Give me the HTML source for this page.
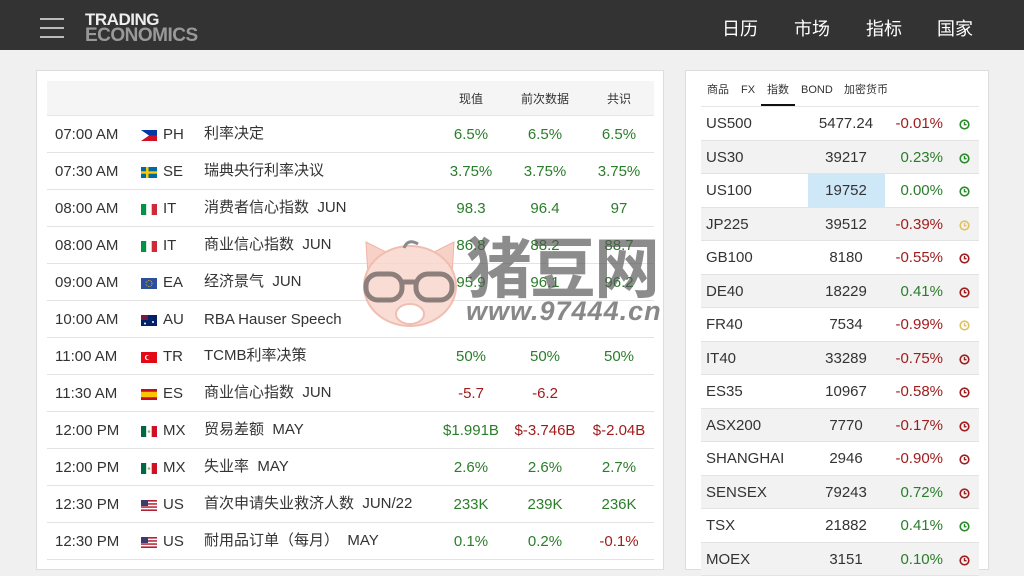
<!DOCTYPE html>
<html><head><meta charset="utf-8"><style>
*{margin:0;padding:0;box-sizing:border-box}
body{width:1024px;height:557px;overflow:hidden;background:#f0f0f0;font-family:"Liberation Sans","Noto Sans CJK SC",sans-serif;color:#333;position:relative}
.hdr{position:absolute;left:0;top:0;width:1024px;height:50px;background:#333}
.ham{position:absolute;left:40px;top:18px;width:24px}
.ham i{display:block;height:2px;background:#bbb;margin-bottom:7px}
.logo{position:absolute;left:85px;top:12px;font-weight:bold;line-height:16px;letter-spacing:-0.5px}
.logo .a{color:#eee;font-size:17px}.logo .b{color:#999;font-size:19px}
.nav{position:absolute;top:15px;font-size:18px;color:#fff}
.lp{position:absolute;left:36px;top:70px;width:628px;height:500px;background:#fff;border:1px solid #ddd}
.th{position:absolute;left:10px;top:10px;width:607px;height:35px;background:#f5f5f5;border-bottom:1px solid #e6e6e6;font-size:12px}
.th span{position:absolute;top:9px;transform:translateX(-50%)}
.row{position:absolute;left:10px;width:607px;height:37px;border-bottom:1px solid #e3e3e3;font-size:15px}
.row span{position:absolute;top:10px;white-space:nowrap}
.row span.d{top:6px}
.row .c{transform:translateX(-50%)}
.g{color:#2a7d2a}.r{color:#a01c1c}
.fl{position:absolute;top:14px;left:94px;width:16px;height:11px}
.rp{position:absolute;left:685px;top:70px;width:304px;height:500px;background:#fff;border:1px solid #ddd}
.tabs{position:absolute;left:15px;top:0;width:278px;height:36px;border-bottom:1px solid #e6e6e6;font-size:11px}
.tabs span{position:absolute;top:10px}
.tabs span.e{top:13px}
.rr{position:absolute;left:15px;width:278px;height:33.5px;border-bottom:1px solid #e3e3e3;font-size:15px}
.rr.o{background:#f2f2f2}
.rr span{position:absolute;top:8px}
.rr .n{left:5px}.rr .v{left:145px;transform:translateX(-50%)}.rr .p{right:36px}
.rr svg{position:absolute;left:258px;top:12px}
.wm{position:absolute;font-weight:bold}
</style></head><body>
<div class="hdr">
<div class="ham"><i></i><i></i><i></i></div>
<div class="logo"><div class="a">TRADING</div><div class="b">ECONOMICS</div></div>
<span class="nav" style="left:722px">日历</span><span class="nav" style="left:794px">市场</span><span class="nav" style="left:866px">指标</span><span class="nav" style="left:937px">国家</span>
</div>

<div class="lp">
<div class="th"><span style="left:424px">现值</span><span style="left:498px">前次数据</span><span style="left:572px">共识</span></div>

<div class="row" style="top:45px"><span style="left:8px">07:00 AM</span><svg class="fl" viewBox="0 0 16 11"><rect width="16" height="5.5" fill="#0038a8"/><rect y="5.5" width="16" height="5.5" fill="#ce1126"/><path d="M0 0L8 5.5L0 11Z" fill="#fff"/></svg><span style="left:116px">PH</span><span class="d" style="left:157px">利率决定</span><span class="c g" style="left:424px">6.5%</span><span class="c g" style="left:498px">6.5%</span><span class="c g" style="left:572px">6.5%</span></div>
<div class="row" style="top:82px"><span style="left:8px">07:30 AM</span><svg class="fl" viewBox="0 0 16 11"><rect width="16" height="11" fill="#006aa7"/><rect x="5" width="2.5" height="11" fill="#fecc00"/><rect y="4.3" width="16" height="2.4" fill="#fecc00"/></svg><span style="left:116px">SE</span><span class="d" style="left:157px">瑞典央行利率决议</span><span class="c g" style="left:424px">3.75%</span><span class="c g" style="left:498px">3.75%</span><span class="c g" style="left:572px">3.75%</span></div>
<div class="row" style="top:119px"><span style="left:8px">08:00 AM</span><svg class="fl" viewBox="0 0 16 11"><rect width="5.3" height="11" fill="#009246"/><rect x="5.3" width="5.4" height="11" fill="#fff"/><rect x="10.7" width="5.3" height="11" fill="#ce2b37"/></svg><span style="left:116px">IT</span><span class="d" style="left:157px">消费者信心指数&nbsp; JUN</span><span class="c g" style="left:424px">98.3</span><span class="c g" style="left:498px">96.4</span><span class="c g" style="left:572px">97</span></div>
<div class="row" style="top:156px"><span style="left:8px">08:00 AM</span><svg class="fl" viewBox="0 0 16 11"><rect width="5.3" height="11" fill="#009246"/><rect x="5.3" width="5.4" height="11" fill="#fff"/><rect x="10.7" width="5.3" height="11" fill="#ce2b37"/></svg><span style="left:116px">IT</span><span class="d" style="left:157px">商业信心指数&nbsp; JUN</span><span class="c g" style="left:424px">86.8</span><span class="c g" style="left:498px">88.2</span><span class="c g" style="left:572px">88.7</span></div>
<div class="row" style="top:193px"><span style="left:8px">09:00 AM</span><svg class="fl" viewBox="0 0 16 11"><rect width="16" height="11" fill="#2b4ea0"/><circle cx="8" cy="5.5" r="3" fill="none" stroke="#fc0" stroke-width="0.8" stroke-dasharray="0.8 0.8"/></svg><span style="left:116px">EA</span><span class="d" style="left:157px">经济景气&nbsp; JUN</span><span class="c g" style="left:424px">95.9</span><span class="c g" style="left:498px">96.1</span><span class="c g" style="left:572px">96.2</span></div>
<div class="row" style="top:230px"><span style="left:8px">10:00 AM</span><svg class="fl" viewBox="0 0 16 11"><rect width="16" height="11" fill="#012169"/><rect width="7" height="5" fill="#c8102e" opacity=".6"/><circle cx="12" cy="7" r="1" fill="#fff"/><circle cx="4" cy="8.5" r="1" fill="#fff"/></svg><span style="left:116px">AU</span><span style="left:157px">RBA Hauser Speech</span></div>
<div class="row" style="top:267px"><span style="left:8px">11:00 AM</span><svg class="fl" viewBox="0 0 16 11"><rect width="16" height="11" fill="#e30a17"/><circle cx="6.5" cy="5.5" r="2.6" fill="#fff"/><circle cx="7.3" cy="5.5" r="2.1" fill="#e30a17"/></svg><span style="left:116px">TR</span><span class="d" style="left:157px">TCMB利率决策</span><span class="c g" style="left:424px">50%</span><span class="c g" style="left:498px">50%</span><span class="c g" style="left:572px">50%</span></div>
<div class="row" style="top:304px"><span style="left:8px">11:30 AM</span><svg class="fl" viewBox="0 0 16 11"><rect width="16" height="11" fill="#c60b1e"/><rect y="2.75" width="16" height="5.5" fill="#ffc400"/></svg><span style="left:116px">ES</span><span class="d" style="left:157px">商业信心指数&nbsp; JUN</span><span class="c r" style="left:424px">-5.7</span><span class="c r" style="left:498px">-6.2</span></div>
<div class="row" style="top:341px"><span style="left:8px">12:00 PM</span><svg class="fl" viewBox="0 0 16 11"><rect width="5.3" height="11" fill="#006847"/><rect x="5.3" width="5.4" height="11" fill="#fff"/><rect x="10.7" width="5.3" height="11" fill="#ce1126"/><circle cx="8" cy="5.5" r="1.3" fill="#8b6"/></svg><span style="left:116px">MX</span><span class="d" style="left:157px">贸易差额&nbsp; MAY</span><span class="c g" style="left:424px">$1.991B</span><span class="c r" style="left:498px">$-3.746B</span><span class="c r" style="left:572px">$-2.04B</span></div>
<div class="row" style="top:378px"><span style="left:8px">12:00 PM</span><svg class="fl" viewBox="0 0 16 11"><rect width="5.3" height="11" fill="#006847"/><rect x="5.3" width="5.4" height="11" fill="#fff"/><rect x="10.7" width="5.3" height="11" fill="#ce1126"/><circle cx="8" cy="5.5" r="1.3" fill="#8b6"/></svg><span style="left:116px">MX</span><span class="d" style="left:157px">失业率&nbsp; MAY</span><span class="c g" style="left:424px">2.6%</span><span class="c g" style="left:498px">2.6%</span><span class="c g" style="left:572px">2.7%</span></div>
<div class="row" style="top:415px"><span style="left:8px">12:30 PM</span><svg class="fl" viewBox="0 0 16 11"><rect width="16" height="11" fill="#b22234"/><rect y="1.6" width="16" height="1.6" fill="#fff"/><rect y="4.7" width="16" height="1.6" fill="#fff"/><rect y="7.8" width="16" height="1.6" fill="#fff"/><rect width="7" height="6" fill="#3c3b6e"/></svg><span style="left:116px">US</span><span class="d" style="left:157px">首次申请失业救济人数&nbsp; JUN/22</span><span class="c g" style="left:424px">233K</span><span class="c g" style="left:498px">239K</span><span class="c g" style="left:572px">236K</span></div>
<div class="row" style="top:452px"><span style="left:8px">12:30 PM</span><svg class="fl" viewBox="0 0 16 11"><rect width="16" height="11" fill="#b22234"/><rect y="1.6" width="16" height="1.6" fill="#fff"/><rect y="4.7" width="16" height="1.6" fill="#fff"/><rect y="7.8" width="16" height="1.6" fill="#fff"/><rect width="7" height="6" fill="#3c3b6e"/></svg><span style="left:116px">US</span><span class="d" style="left:157px">耐用品订单（每月）&nbsp; MAY</span><span class="c g" style="left:424px">0.1%</span><span class="c g" style="left:498px">0.2%</span><span class="c r" style="left:572px">-0.1%</span></div>
</div>

<div class="rp">
<div class="tabs"><span style="left:6px">商品</span><span class="e" style="left:40px">FX</span><span style="left:66px">指数</span><span class="e" style="left:100px">BOND</span><span style="left:143px">加密货币</span><div style="position:absolute;left:60px;top:33px;width:34px;height:2px;background:#111"></div></div>
<div class="rr" style="top:36px"><span class="n">US500</span><span class="v">5477.24</span><span class="p r">-0.01%</span><svg width="11" height="11" viewBox="0 0 11 11"><circle cx="5.5" cy="5.5" r="4.3" fill="none" stroke="#2a8a2a" stroke-width="1.6"/><path d="M5.5 3v2.7h2" fill="none" stroke="#2a8a2a" stroke-width="1.4"/></svg></div>
<div class="rr o" style="top:69.5px"><span class="n">US30</span><span class="v">39217</span><span class="p g">0.23%</span><svg width="11" height="11" viewBox="0 0 11 11"><circle cx="5.5" cy="5.5" r="4.3" fill="none" stroke="#2a8a2a" stroke-width="1.6"/><path d="M5.5 3v2.7h2" fill="none" stroke="#2a8a2a" stroke-width="1.4"/></svg></div>
<div class="rr" style="top:103px"><div style="position:absolute;left:107px;top:0;width:77px;height:33px;background:#cfe8f7"></div><span class="n">US100</span><span class="v">19752</span><span class="p g">0.00%</span><svg width="11" height="11" viewBox="0 0 11 11"><circle cx="5.5" cy="5.5" r="4.3" fill="none" stroke="#2a8a2a" stroke-width="1.6"/><path d="M5.5 3v2.7h2" fill="none" stroke="#2a8a2a" stroke-width="1.4"/></svg></div>
<div class="rr o" style="top:136.5px"><span class="n">JP225</span><span class="v">39512</span><span class="p r">-0.39%</span><svg width="11" height="11" viewBox="0 0 11 11"><circle cx="5.5" cy="5.5" r="4.3" fill="none" stroke="#e0c060" stroke-width="1.6"/><path d="M5.5 3v2.7h2" fill="none" stroke="#e0c060" stroke-width="1.4"/></svg></div>
<div class="rr" style="top:170px"><span class="n">GB100</span><span class="v">8180</span><span class="p r">-0.55%</span><svg width="11" height="11" viewBox="0 0 11 11"><circle cx="5.5" cy="5.5" r="4.3" fill="none" stroke="#a01c1c" stroke-width="1.6"/><path d="M5.5 3v2.7h2" fill="none" stroke="#a01c1c" stroke-width="1.4"/></svg></div>
<div class="rr o" style="top:203.5px"><span class="n">DE40</span><span class="v">18229</span><span class="p g">0.41%</span><svg width="11" height="11" viewBox="0 0 11 11"><circle cx="5.5" cy="5.5" r="4.3" fill="none" stroke="#a01c1c" stroke-width="1.6"/><path d="M5.5 3v2.7h2" fill="none" stroke="#a01c1c" stroke-width="1.4"/></svg></div>
<div class="rr" style="top:237px"><span class="n">FR40</span><span class="v">7534</span><span class="p r">-0.99%</span><svg width="11" height="11" viewBox="0 0 11 11"><circle cx="5.5" cy="5.5" r="4.3" fill="none" stroke="#e0c060" stroke-width="1.6"/><path d="M5.5 3v2.7h2" fill="none" stroke="#e0c060" stroke-width="1.4"/></svg></div>
<div class="rr o" style="top:270.5px"><span class="n">IT40</span><span class="v">33289</span><span class="p r">-0.75%</span><svg width="11" height="11" viewBox="0 0 11 11"><circle cx="5.5" cy="5.5" r="4.3" fill="none" stroke="#a01c1c" stroke-width="1.6"/><path d="M5.5 3v2.7h2" fill="none" stroke="#a01c1c" stroke-width="1.4"/></svg></div>
<div class="rr" style="top:304px"><span class="n">ES35</span><span class="v">10967</span><span class="p r">-0.58%</span><svg width="11" height="11" viewBox="0 0 11 11"><circle cx="5.5" cy="5.5" r="4.3" fill="none" stroke="#a01c1c" stroke-width="1.6"/><path d="M5.5 3v2.7h2" fill="none" stroke="#a01c1c" stroke-width="1.4"/></svg></div>
<div class="rr o" style="top:337.5px"><span class="n">ASX200</span><span class="v">7770</span><span class="p r">-0.17%</span><svg width="11" height="11" viewBox="0 0 11 11"><circle cx="5.5" cy="5.5" r="4.3" fill="none" stroke="#a01c1c" stroke-width="1.6"/><path d="M5.5 3v2.7h2" fill="none" stroke="#a01c1c" stroke-width="1.4"/></svg></div>
<div class="rr" style="top:371px"><span class="n">SHANGHAI</span><span class="v">2946</span><span class="p r">-0.90%</span><svg width="11" height="11" viewBox="0 0 11 11"><circle cx="5.5" cy="5.5" r="4.3" fill="none" stroke="#a01c1c" stroke-width="1.6"/><path d="M5.5 3v2.7h2" fill="none" stroke="#a01c1c" stroke-width="1.4"/></svg></div>
<div class="rr o" style="top:404.5px"><span class="n">SENSEX</span><span class="v">79243</span><span class="p g">0.72%</span><svg width="11" height="11" viewBox="0 0 11 11"><circle cx="5.5" cy="5.5" r="4.3" fill="none" stroke="#a01c1c" stroke-width="1.6"/><path d="M5.5 3v2.7h2" fill="none" stroke="#a01c1c" stroke-width="1.4"/></svg></div>
<div class="rr" style="top:438px"><span class="n">TSX</span><span class="v">21882</span><span class="p g">0.41%</span><svg width="11" height="11" viewBox="0 0 11 11"><circle cx="5.5" cy="5.5" r="4.3" fill="none" stroke="#2a8a2a" stroke-width="1.6"/><path d="M5.5 3v2.7h2" fill="none" stroke="#2a8a2a" stroke-width="1.4"/></svg></div>
<div class="rr o" style="top:471.5px"><span class="n">MOEX</span><span class="v">3151</span><span class="p g">0.10%</span><svg width="11" height="11" viewBox="0 0 11 11"><circle cx="5.5" cy="5.5" r="4.3" fill="none" stroke="#a01c1c" stroke-width="1.6"/><path d="M5.5 3v2.7h2" fill="none" stroke="#a01c1c" stroke-width="1.4"/></svg></div>
</div>

<svg style="position:absolute;left:360px;top:236px;opacity:.85" width="100" height="92" viewBox="0 0 100 92">
<path d="M8 40L6 6L30 18Z" fill="#f6c8bd" stroke="#eaa99a"/><path d="M92 40L94 6L70 18Z" fill="#f6c8bd" stroke="#eaa99a"/>
<ellipse cx="50" cy="50" rx="46" ry="40" fill="#f9d6cc" stroke="#eeb3a5" stroke-width="2"/>
<path d="M44 12q4-10 14-4" stroke="#777" stroke-width="3" fill="none"/>
<rect x="6" y="38" width="36" height="26" rx="12" fill="none" stroke="#7a6a66" stroke-width="5"/><rect x="56" y="38" width="36" height="26" rx="12" fill="none" stroke="#7a6a66" stroke-width="5"/><path d="M42 46h14" stroke="#7a6a66" stroke-width="5"/>
<ellipse cx="50" cy="78" rx="14" ry="10" fill="#fff" stroke="#eeb3a5" stroke-width="2"/>
</svg>
<div class="wm" style="left:466px;top:226px;font-size:66px;letter-spacing:-2px;font-family:'Noto Sans CJK SC',sans-serif;line-height:76px;color:rgba(85,85,85,0.68)">猪豆网</div>
<div class="wm" style="left:466px;top:296px;font-size:27px;font-style:italic;letter-spacing:1px;color:rgba(85,85,85,0.7)">www.97444.cn</div>
</body></html>
